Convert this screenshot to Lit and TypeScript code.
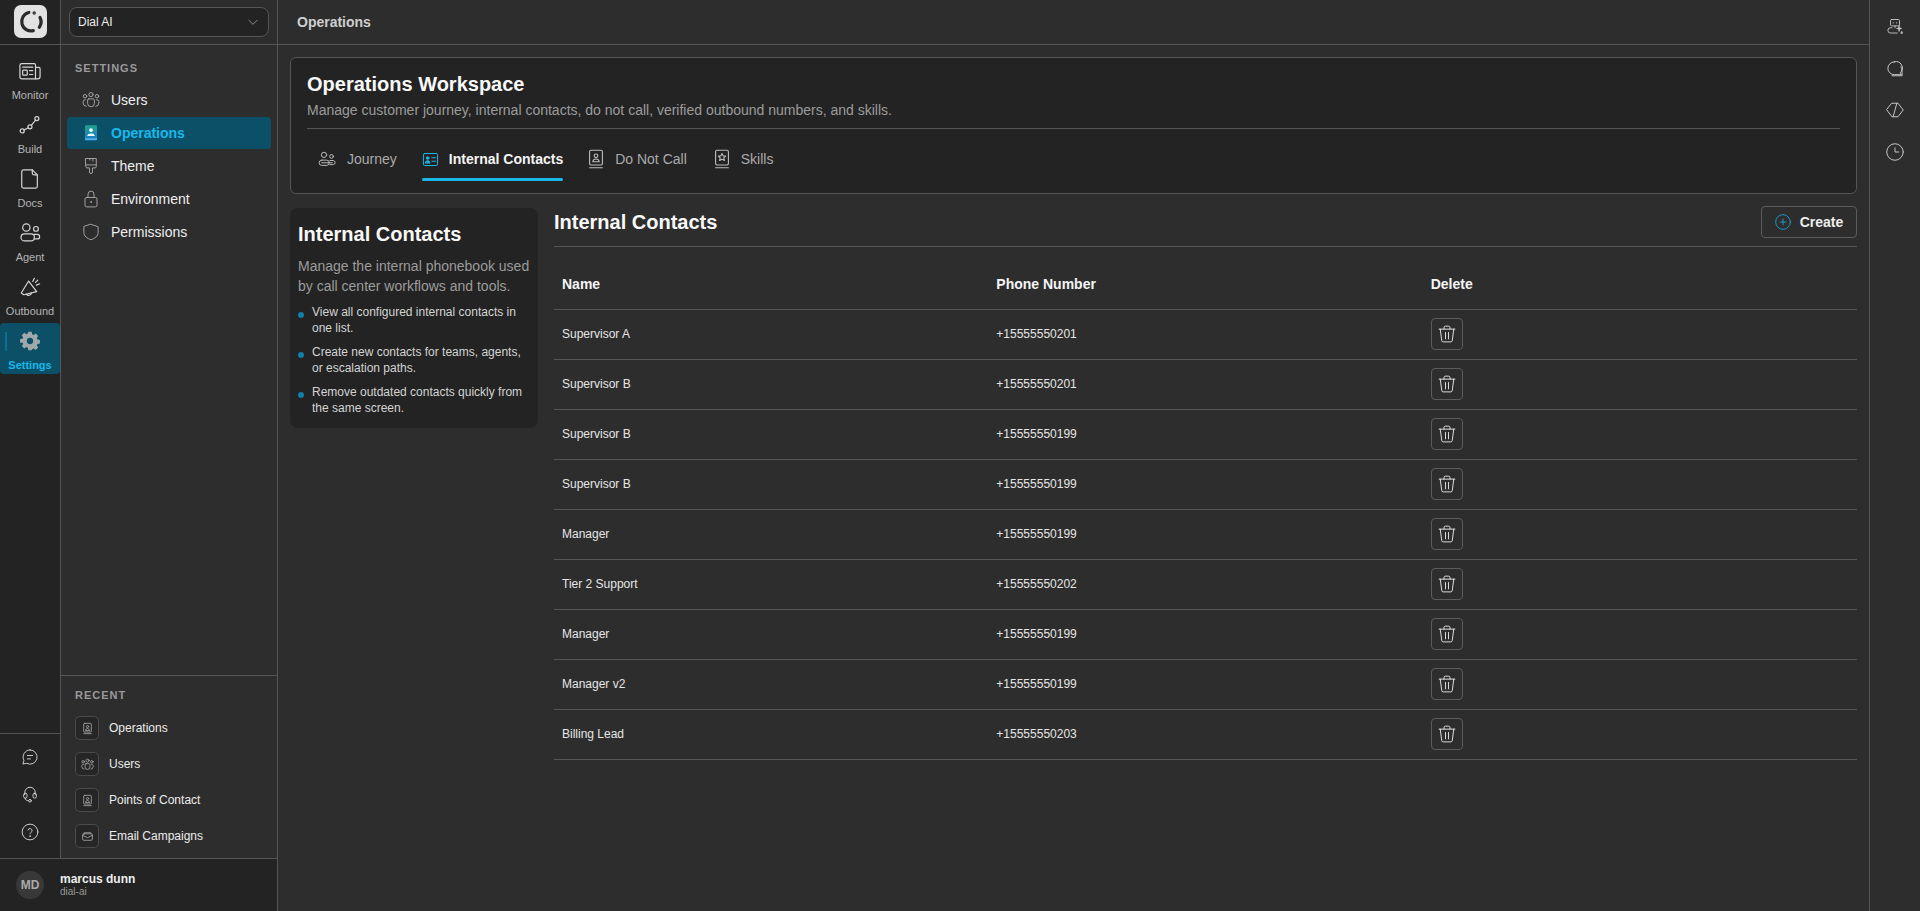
import { LitElement, html, css, svg } from "lit";
import { customElement } from "lit/decorators.js";

const ic = (size: number, body: unknown, sw = 1.5, vb = 24) => html`<svg width=${size} height=${size} viewBox="0 0 ${vb} ${vb}" fill="none" stroke="currentColor" stroke-width=${sw} stroke-linecap="round" stroke-linejoin="round">${body}</svg>`;

const I = {
  monitor: svg`<path d="M3 4h13.500A1.500 1.500 0 0 1 18 5.500V20.500H3a2 2 0 0 1-2-2V6a2 2 0 0 1 2-2z"/><path d="M18 8h3.500A1.500 1.500 0 0 1 23 9.500V18a2.500 2.500 0 0 1-2.500 2.500H18"/><rect x="4" y="11" width="5" height="5.500" rx=".8"/><path d="M4 7.800h11M11.500 11.500H15M11.500 15.800H15"/>`,
  build: svg`<circle cx="3.500" cy="18.500" r="2.200"/><circle cx="12" cy="14" r="2.200"/><circle cx="19.500" cy="5" r="2.200"/><path d="M5.500 17.500 10 15M13.400 12.300l4.700-5.600"/>`,
  doc: svg`<path d="M5 2h9.500l5.500 5.500V20a2 2 0 0 1-2 2H5a2 2 0 0 1-2-2V4a2 2 0 0 1 2-2z"/><path d="M14.500 2v3.500a2 2 0 0 0 2 2H20"/>`,
  agent: svg`<circle cx="8" cy="6" r="4"/><circle cx="18.500" cy="7.500" r="2.600"/><path d="M6 13h7a3.800 3.800 0 0 1 0 7.600H6A3.800 3.800 0 0 1 6 13z"/><path d="M16.500 13.500H20a2.500 2.500 0 0 1 0 5h-3.500"/>`,
  megaphone: svg`<path d="M10.500 5.500 2.500 18.500l2.800 2 14-3.500z"/><path d="M8 19.800a3 3 0 0 0 5.500-1.500"/><path d="M15 6l1.800-3.500M19 10l3.500-1.500M18 7l2.500-2.500"/>`,
  users: svg`<circle cx="12" cy="4.800" r="2.800"/><circle cx="4" cy="7" r="2.300"/><circle cx="20" cy="7" r="2.300"/><path d="M9 10.500h6a1.500 1.500 0 0 1 1.500 1.500v4.500a4.500 4.500 0 0 1-9 0V12A1.500 1.500 0 0 1 9 10.500z"/><path d="M4.500 11.500A3 3 0 0 0 1.500 14v2a4.500 4.500 0 0 0 4 4.500M19.500 11.500a3 3 0 0 1 3 2.500v2a4.500 4.500 0 0 1-4 4.500"/>`,
  brush: svg`<path d="M5 2h14v11a1.500 1.500 0 0 1-1.500 1.500H14V20a2 2 0 0 1-4 0v-5.500H6.500A1.500 1.500 0 0 1 5 13z"/><path d="M5 10.500h14M14.500 2v3.500M10.500 2v2"/>`,
  lock: svg`<rect x="4" y="10" width="16" height="12.500" rx="2"/><path d="M8 10V5.500a4 4 0 0 1 8 0V10"/><circle cx="12" cy="16" r=".6" fill="currentColor"/>`,
  shield: svg`<path d="M12 1.800 21.500 5v7.500c0 5-4.500 8.200-9.500 9.800-5-1.600-9.500-4.800-9.500-9.800V5z"/>`,
  book: svg`<rect x="5" y="2.500" width="14" height="16" rx="1.500"/><path d="M5 21.500h14"/><circle cx="12" cy="8.500" r="2"/><path d="M8.500 15c.3-2 1.800-3 3.500-3s3.200 1 3.500 3z"/>`,
  bookStar: svg`<rect x="5" y="2.500" width="14" height="16" rx="1.500"/><path d="M5 21.500h14"/><path d="m12 6 1.200 2.600 2.800.3-2 1.900.6 2.800-2.600-1.400-2.600 1.400.6-2.800-2-1.900 2.800-.3z"/>`,
  chat: svg`<path d="M12 2.500a9.500 9.500 0 1 1-4.500 17.900l-5 1 1.400-4.900A9.500 9.500 0 0 1 12 2.500z"/><path d="M8.500 10h7M8.500 14.500h4"/>`,
  headset: svg`<path d="M5 13V10a7 7 0 0 1 14 0v3"/><rect x="3.500" y="11" width="4.500" height="6.500" rx="2"/><rect x="16" y="11" width="4.500" height="6.500" rx="2"/><path d="M5.500 17.500c0 2.500 2 3.500 4.500 3.500"/><circle cx="12" cy="21" r="1.800"/>`,
  help: svg`<circle cx="12" cy="12" r="10.500"/><path d="M9.200 9.300a2.900 2.900 0 0 1 5.600 1c0 2-2.800 2.300-2.800 4"/><circle cx="12" cy="17.500" r=".4" fill="currentColor"/>`,
  journey: svg`<circle cx="8" cy="6.500" r="3.500"/><circle cx="18" cy="8.500" r="2.500"/><path d="M5 13.500h6.500a3.500 3.500 0 0 1 0 7H5a3.500 3.500 0 0 1 0-7z"/><path d="M16 14h4.500a2.800 2.800 0 0 1 0 5.500H16"/><path d="M5 17h14"/>`,
  idcard: svg`<rect x="2" y="3.500" width="20" height="17" rx="2"/><circle cx="8" cy="10" r="1.800" fill="currentColor"/><path d="M4.800 16.500c.3-2 1.700-2.800 3.200-2.800s2.900.8 3.200 2.800z" fill="currentColor"/><path d="M14 9.500h5M14 14.500h5"/>`,
  mail: svg`<rect x="3" y="7" width="18" height="12" rx="2"/><path d="M6 7V5h12v2M3 10l9 4 9-4"/>`,
  plus: svg`<circle cx="12" cy="12" r="11"/><path d="M12 7.500v9M7.500 12h9"/>`,
  trash: svg`<path d="M1.500 5.500h21"/><path d="M3 5.500l2 15.300a2 2 0 0 0 2 1.700h10a2 2 0 0 0 2-1.700l2-15.300"/><path d="M8 5.500V3.500a2 2 0 0 1 2-2h4a2 2 0 0 1 2 2v2"/><path d="M10 10v8.500M14 10v8.500"/>`,
  bot: svg`<rect x="6" y="2" width="12" height="8.500" rx="1.500"/><path d="M9.500 6.500h.5M14 6.500h.5M12 10.500v2.500M8 13H6a3.500 3.500 0 0 0 0 7h9"/><path d="M17.500 10c.5 3 1 3.500 3.500 4-2.500.5-3 1-3.500 4-.5-3-1-3.500-3.500-4 2.500-.5 3-1 3.500-4zM21 18c.2 1.200.5 1.500 1.700 1.700-1.200.2-1.500.5-1.700 1.700-.2-1.200-.5-1.500-1.700-1.700 1.200-.2 1.500-.5 1.700-1.700z" fill="currentColor" stroke-width=".8"/>`,
  bubble: svg`<path d="M11 2.500a8.500 8.500 0 1 0 0 17h9.500L19 17a8.500 8.500 0 0 0-8-14.500z"/><path d="M20 9c1.500 3 1.500 8 1.500 12H8"/>`,
  code: svg`<path d="M8 3h8l7 9-7 9H8l-7-9z"/><path d="M14.500 3 9.500 21"/>`,
  clock: svg`<circle cx="12" cy="12" r="11"/><path d="M12 6.500V12h5"/>`,
  chevron: svg`<path d="m5 9 7 7 7-7"/>`,
};

const railItems: [unknown, string][] = [
  [I.monitor, "Monitor"], [I.build, "Build"], [I.doc, "Docs"], [I.agent, "Agent"], [I.megaphone, "Outbound"],
];
const navItems: [unknown, string][] = [
  [I.users, "Users"], [I.book, "Operations"], [I.brush, "Theme"], [I.lock, "Environment"], [I.shield, "Permissions"],
];
const recent: [unknown, string][] = [
  [I.book, "Operations"], [I.users, "Users"], [I.book, "Points of Contact"], [I.mail, "Email Campaigns"],
];
const rows: [string, string][] = [
  ["Supervisor A", "+15555550201"], ["Supervisor B", "+15555550201"], ["Supervisor B", "+15555550199"],
  ["Supervisor B", "+15555550199"], ["Manager", "+15555550199"], ["Tier 2 Support", "+15555550202"],
  ["Manager", "+15555550199"], ["Manager v2", "+15555550199"], ["Billing Lead", "+15555550203"],
];
const bullets = [
  "View all configured internal contacts in one list.",
  "Create new contacts for teams, agents, or escalation paths.",
  "Remove outdated contacts quickly from the same screen.",
];

@customElement("app-root")
export class AppRoot extends LitElement {
  static styles = css`
    :host { display: block; height: 911px; overflow: hidden; font-family: "Liberation Sans", Arial, sans-serif; color: #f2f2f2; background: #2d2d2d; }
    * { box-sizing: border-box; }
    .app { display: grid; grid-template-columns: 278px 1fr 51px; height: 911px; }
    .left { display: flex; flex-direction: column; border-right: 1px solid #555; min-height: 0; }
    .top { height: 45px; display: flex; border-bottom: 1px solid #555; flex: none; }
    .logoCell { width: 61px; background: #232323; border-right: 1px solid #555; display: flex; justify-content: center; align-items: center; flex: none; padding-bottom: 1px; }
    .logo { width: 33px; height: 33px; border-radius: 7px; background: #e2e2e2; display: flex; color: #2a2a2a; }
    .selCell { flex: 1; background: #2d2d2d; padding: 7px 8px 0; }
    .sel { height: 30px; border: 1px solid #555; border-radius: 8px; background: #232323; display: flex; align-items: center; justify-content: space-between; padding: 0 8px; font-size: 12px; color: #eee; }
    .sel svg { color: #999; }
    .mid { flex: 1; display: flex; min-height: 0; }
    .rail { width: 61px; flex: none; background: #232323; border-right: 1px solid #555; display: flex; flex-direction: column; justify-content: space-between; }
    .railTop { padding-top: 15px; display: flex; flex-direction: column; }
    .railItem { height: 54px; display: flex; flex-direction: column; align-items: center; color: #d6d6d6; font-size: 11px; }
    .railItem svg { display: block; flex: none; }
    .railItem span { line-height: 14px; color: #b5b5b5; margin-top: 6px; }
    .railItem.on { height: 51px; margin-top: -7px; padding-top: 8px; background: #0c5068; border-radius: 4px; position: relative; }
    .railItem.on span { color: #1ab8ea; font-weight: 700; margin-top: 7px; }
    .railItem.on svg { color: #a0a8ac; }
    .railItem.on::before { content: ""; position: absolute; left: 5px; top: 9px; height: 19px; width: 2px; background: #0e6f8f; }
    .railBot { border-top: 1px solid #555; height: 125px; padding-top: 12px; display: flex; flex-direction: column; align-items: center; }
    .railBot div { height: 38px; width: 100%; display: flex; justify-content: center; padding-top: 2px; color: #cfcfcf; }
    .side { flex: 1; display: flex; flex-direction: column; justify-content: space-between; min-width: 0; }
    .sideTop { padding: 16px 6px 0; }
    .label { font-size: 11px; font-weight: 700; letter-spacing: 1px; color: #9a9a9a; line-height: 14px; }
    .sideTop .label { padding-left: 8px; margin-bottom: 9px; }
    .nav { height: 32px; margin-bottom: 1px; display: flex; align-items: center; border-radius: 4px; font-size: 14px; color: #efefef; }
    .nav .ico { width: 44px; padding-left: 15px; flex: none; color: #a8a8a8; display: flex; }
    .nav.on { background: #0c5068; color: #1ab8ea; font-weight: 700; }
    .sideBot { border-top: 1px solid #555; height: 183px; padding: 12px 14px 0; }
    .rec { height: 36px; display: flex; align-items: center; gap: 10px; font-size: 12px; color: #ececec; }
    .recIco { width: 24px; height: 24px; border: 1px solid #4a4a4a; border-radius: 5px; background: #262626; display: flex; align-items: center; justify-content: center; color: #aaa; flex: none; }
    .recs { margin-top: 8px; }
    .user { height: 53px; flex: none; border-top: 1px solid #555; background: #232323; display: flex; align-items: center; padding-left: 16px; gap: 16px; }
    .av { width: 28px; height: 28px; border-radius: 50%; background: #383838; color: #aaa; font-size: 12px; font-weight: 700; display: flex; align-items: center; justify-content: center; flex: none; }
    .uname { font-size: 12px; font-weight: 700; line-height: 14px; color: #eee; }
    .uorg { font-size: 10px; line-height: 12px; color: #999; }
    .main { min-width: 0; display: flex; flex-direction: column; }
    .hdr { height: 45px; flex: none; border-bottom: 1px solid #555; display: flex; align-items: center; padding-left: 19px; font-size: 14px; font-weight: 700; color: #cfcfcf; padding-bottom: 1px; }
    .body { padding: 12px 12px 0 12px; display: flex; flex-direction: column; gap: 14px; }
    .card { height: 137px; background: #232323; border: 1px solid #555; border-radius: 6px; padding: 0 16px; }
    .card h1 { margin: 14px 0 0; font-size: 20px; line-height: 24px; font-weight: 700; color: #f8f8f8; }
    .card p { margin: 4px 0 0; font-size: 14px; line-height: 20px; color: #9c9c9c; }
    .tabs { border-top: 1px solid #555; margin-top: 8px; display: flex; padding-left: 11px; gap: 25px; }
    .tab { height: 52px; padding-top: 8px; display: flex; align-items: center; gap: 11px; font-size: 14px; color: #aaa; position: relative; }
    .tab svg { color: #bdbdbd; flex: none; }
    .tab.on { color: #f5f5f5; font-weight: 700; gap: 10px; }
    .tab.on svg { color: #1ab8ea; }
    .tab.on::after { content: ""; position: absolute; left: 0; right: 0; bottom: 0; height: 3px; background: #1ab8ea; border-radius: 2px; }
    .tab.bk { gap: 8px; }
    .tab.bk svg { margin-left: -3px; }
    .tab.last { margin-left: 2px; }
    .split { display: grid; grid-template-columns: 248px 1fr; gap: 16px; }
    .info { background: #232323; border-radius: 8px; height: 220px; padding: 14px 8px 0; }
    .info h2 { margin: 0; font-size: 20px; line-height: 24px; font-weight: 700; color: #f8f8f8; }
    .info p { margin: 10px 0 0; font-size: 14px; line-height: 20px; color: #9c9c9c; }
    ul { list-style: none; margin: 8px 0 0; padding: 0; display: flex; flex-direction: column; gap: 8px; }
    li { font-size: 12px; line-height: 16px; color: #d4d4d4; padding-left: 14px; position: relative; }
    li::before { content: ""; position: absolute; left: 0; top: 8px; width: 6px; height: 6px; border-radius: 50%; background: #0e7fa6; }
    .tblHead { height: 39px; border-bottom: 1px solid #555; display: flex; justify-content: space-between; align-items: flex-start; }
    .tblHead h2 { margin: 2px 0 0; font-size: 20px; line-height: 24px; font-weight: 700; color: #f8f8f8; }
    .create { height: 32px; width: 96px; margin-top: -2px; border: 1px solid #5c5c5c; border-radius: 4px; display: flex; align-items: center; justify-content: center; gap: 9px; font-size: 14px; font-weight: 700; color: #eee; }
    .create svg { color: #1e9cc8; }
    .row { display: grid; grid-template-columns: repeat(3, 1fr); height: 50px; padding-bottom: 2px; border-bottom: 1px solid #555; align-items: center; font-size: 12px; color: #e6e6e6; }
    .row > div { padding-left: 8px; }
    .row.head { height: 63px; font-size: 14px; font-weight: 700; color: #f5f5f5; padding: 12px 0 0; }
    .del { width: 32px; height: 32px; border: 1px solid #5c5c5c; border-radius: 4px; display: flex; align-items: center; justify-content: center; color: #eee; }
    .rrail { border-left: 1px solid #555; display: flex; flex-direction: column; align-items: center; padding-top: 18px; gap: 23.6px; color: #c8c8c8; }
  `;

  render() {
    return html`<div class="app">
      <div class="left">
        <div class="top">
          <div class="logoCell"><div class="logo">
            <svg width="33" height="33" viewBox="0 0 33 33" fill="none" stroke="currentColor" stroke-width="3.200" stroke-linecap="round"><path d="M14.800 7.500A9.300 9.300 0 0 0 19.300 25.600"/><path d="M26 12.500a9.500 9.500 0 0 1-.7 9.800"/><circle cx="20.200" cy="8" r=".6" fill="currentColor" stroke-width="2.200"/></svg>
          </div></div>
          <div class="selCell"><div class="sel"><span>Dial AI</span>${ic(14, I.chevron)}</div></div>
        </div>
        <div class="mid">
          <div class="rail">
            <div class="railTop">
              ${railItems.map(([i, l]) => html`<div class="railItem">${ic(22, i, 1.3)}<span>${l}</span></div>`)}
              <div class="railItem on">
                <svg width="20" height="20" viewBox="0 0 24 24" fill="currentColor"><path fill-rule="evenodd" d="M10 1h4l.6 2.900 1.800.8 2.500-1.600 2.900 2.900-1.600 2.500.8 1.800 2.900.6v4l-2.900.6-.8 1.800 1.600 2.500-2.900 2.900-2.500-1.600-1.800.8L14 23h-4l-.6-2.900-1.800-.8-2.500 1.600-2.900-2.900 1.600-2.500-.8-1.800L0 14v-4l2.900-.6.8-1.800-1.600-2.500 2.900-2.900 2.500 1.600 1.800-.8zM12 8.200a3.800 3.800 0 1 0 0 7.600 3.800 3.800 0 0 0 0-7.600z"/></svg>
                <span>Settings</span>
              </div>
            </div>
            <div class="railBot">
              <div>${ic(18, I.chat, 1.3)}</div><div>${ic(18, I.headset, 1.3)}</div><div>${ic(18, I.help, 1.3)}</div>
            </div>
          </div>
          <div class="side">
            <div class="sideTop">
              <div class="label">SETTINGS</div>
              ${navItems.map(([i, l], n) => html`<div class="nav ${n === 1 ? "on" : ""}"><div class="ico">${n === 1 ? svg`<svg width="18" height="18" viewBox="0 0 24 24"><defs><linearGradient id="g" x1="0" y1="0" x2="0" y2="1"><stop offset="0" stop-color="#1fa08f"/><stop offset="1" stop-color="#1a7fd0"/></linearGradient></defs><rect x="4" y="1.500" width="16" height="20.500" rx="1.500" fill="url(#g)"/><path d="M4 19.500h16v1.200H4z" fill="#8fd8f5"/><circle cx="12" cy="8" r="2.500" fill="#fff"/><path d="M7 16c.3-2.500 2.500-3.500 5-3.500s4.700 1 5 3.500z" fill="#fff"/></svg>` : ic(18, i, 1.25)}</div>${l}</div>`)}
            </div>
            <div class="sideBot">
              <div class="label">RECENT</div>
              <div class="recs">${recent.map(([i, l]) => html`<div class="rec"><div class="recIco">${ic(13, i, 1.5)}</div>${l}</div>`)}</div>
            </div>
          </div>
        </div>
        <div class="user">
          <div class="av">MD</div>
          <div><div class="uname">marcus dunn</div><div class="uorg">dial-ai</div></div>
        </div>
      </div>
      <div class="main">
        <div class="hdr">Operations</div>
        <div class="body">
          <div class="card">
            <h1>Operations Workspace</h1>
            <p>Manage customer journey, internal contacts, do not call, verified outbound numbers, and skills.</p>
            <div class="tabs">
              <div class="tab">${ic(18, I.journey, 1.3)}<span>Journey</span></div>
              <div class="tab on">${ic(17, I.idcard, 1.4)}<span>Internal Contacts</span></div>
              <div class="tab bk">${ic(22, I.book, 1.2)}<span>Do Not Call</span></div>
              <div class="tab bk last">${ic(22, I.bookStar, 1.2)}<span>Skills</span></div>
            </div>
          </div>
          <div class="split">
            <div class="info">
              <h2>Internal Contacts</h2>
              <p>Manage the internal phonebook used by call center workflows and tools.</p>
              <ul>${bullets.map((b) => html`<li>${b}</li>`)}</ul>
            </div>
            <div>
              <div class="tblHead"><h2>Internal Contacts</h2><div class="create">${ic(16, I.plus, 1.4)}<span>Create</span></div></div>
              <div class="row head"><div>Name</div><div>Phone Number</div><div>Delete</div></div>
              ${rows.map(([a, b]) => html`<div class="row"><div>${a}</div><div>${b}</div><div><div class="del">${ic(18, I.trash, 1.2)}</div></div></div>`)}
            </div>
          </div>
        </div>
      </div>
      <div class="rrail">
        ${ic(18, I.bot, 1.2)}${ic(18, I.bubble, 1.3)}${ic(18, I.code, 1.3)}${ic(18, I.clock, 1.3)}
      </div>
    </div>`;
  }
}
